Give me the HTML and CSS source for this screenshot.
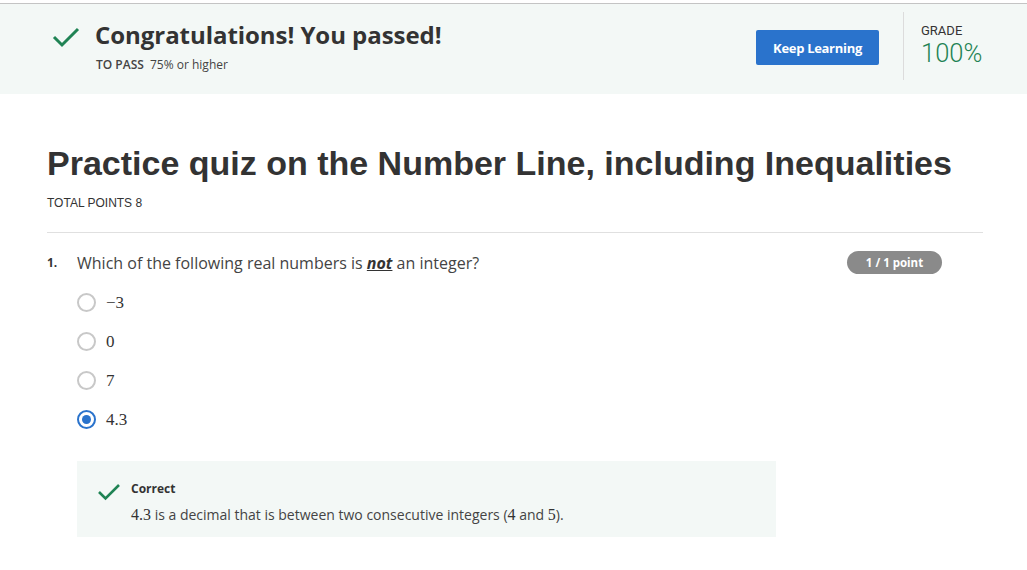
FILE: index.html
```html
<!DOCTYPE html>
<html>
<head>
<meta charset="utf-8">
<link rel="stylesheet" href="styles.css">
</head>
<body>
<div class="topline"></div>
<header class="banner">
  <div class="pass">
    <svg class="check" width="28" height="22" viewBox="0 0 28 22"><path d="M2 11 L10 19 L26 3" fill="none" stroke="#1f8354" stroke-width="3"/></svg>
    <div>
      <h2 class="congrats">Congratulations! You passed!</h2>
      <div class="topass"><b>TO PASS</b> 75% or higher</div>
    </div>
  </div>
  <button class="keep">Keep Learning</button>
  <div class="grade">
    <div class="grade-label">GRADE</div>
    <div class="grade-value">100%</div>
  </div>
</header>
<main class="content">
  <h1 class="title">Practice quiz on the Number Line, including Inequalities</h1>
  <div class="total">TOTAL POINTS 8</div>
  <div class="question">
    <div class="qhead">
      <span class="qnum">1.</span>
      <span class="qtext">Which of the following real numbers is <b><i><u>not</u></i></b> an integer?</span>
      <span class="badge">1 / 1 point</span>
    </div>
    <ul class="options">
      <li><span class="radio"></span><span class="math">−3</span></li>
      <li><span class="radio"></span><span class="math">0</span></li>
      <li><span class="radio"></span><span class="math">7</span></li>
      <li><span class="radio checked"></span><span class="math">4.3</span></li>
    </ul>
    <div class="feedback">
      <svg class="fcheck" width="24" height="18" viewBox="0 0 24 18"><path d="M2 9 L8.5 15.5 L22 2" fill="none" stroke="#1f8354" stroke-width="2.6"/></svg>
      <div>
        <div class="correct">Correct</div>
        <div class="explain"><span class="math">4.3</span> is a decimal that is between two consecutive integers (<span class="math">4</span> and <span class="math">5</span>).</div>
      </div>
    </div>
  </div>
</main>
</body>
</html>
```

FILE: styles.css
```css
* { box-sizing: border-box; }
html, body { margin: 0; padding: 0; background: #fff; }
body { font-family: "Open Sans", sans-serif; color: #333; }

.topline { height: 4px; border-bottom: 1px solid #c4c4c4; background: #fff; }

.banner {
  background: #f3f8f6;
  height: 90px;
  display: flex;
  align-items: flex-start;
  padding: 0 0 0 52px;
}
.pass { display: flex; align-items: flex-start; flex: 1; padding-top: 15px; }
.check { margin-top: 7px; margin-right: 15px; flex: none; }
.congrats {
  margin: 0;
  font-size: 24px;
  font-weight: 700;
  line-height: 32px;
  color: #333;
  letter-spacing: -0.05px;
}
.topass { font-size: 12px; color: #444; margin-top: 5px; margin-left: 1px; }
.topass b { font-weight: 600; margin-right: 3px; }

.keep {
  margin-top: 26px;
  width: 123px;
  height: 35px;
  border: none;
  border-radius: 2px;
  background: #2a73cc;
  color: #fff;
  font-family: "Open Sans", sans-serif;
  font-weight: 700;
  font-size: 13px;
  letter-spacing: -0.3px;
  padding: 0;
}
.grade {
  margin-top: 8px;
  margin-left: 24px;
  height: 68px;
  border-left: 1px solid #dcdcdc;
  padding-left: 17px;
  padding-top: 11px;
  width: 124px;
}
.grade-label { font-family: Roboto, sans-serif; font-size: 13px; color: #333; line-height: 15px; }
.grade-value { font-family: Roboto, sans-serif; font-weight: 300; font-size: 25.5px; color: #1f8354; line-height: 28px; margin-top: 1px; }

.content { padding: 0 44px 0 47px; }
.title {
  margin: 49px 0 0;
  font-family: "Liberation Sans", Arial, sans-serif;
  font-weight: 700;
  font-size: 34px;
  line-height: 40px;
  color: #333;
}
.total {
  font-family: "Liberation Sans", Arial, sans-serif;
  font-size: 12px;
  color: #333;
  margin-top: 13px;
  padding-bottom: 22px;
  border-bottom: 1px solid #e0e0e0;
}
.question { padding-top: 18px; }
.qhead { display: flex; align-items: center; padding-right: 41px; }
.qnum { font-weight: 700; font-size: 12px; width: 30px; color: #333; }
.qtext { font-size: 16px; color: #444; flex: 1; }
.qtext b { font-weight: 700; color: #333; }
.badge {
  background: #8a8a8a;
  color: #fff;
  font-weight: 700;
  font-size: 11.5px;
  border-radius: 12px;
  width: 95px;
  height: 23px;
  line-height: 23px;
  text-align: center;
}

.options { list-style: none; margin: 9px 0 0; padding: 0 0 0 30px; }
.options li { display: flex; align-items: center; height: 39px; }
.radio {
  width: 19px; height: 19px;
  border: 2px solid #c8c8c8;
  border-radius: 50%;
  margin-right: 10px;
  position: relative;
  flex: none;
}
.radio.checked { border-color: #2a73cc; }
.radio.checked::after {
  content: "";
  position: absolute;
  left: 3px; top: 3px;
  width: 9px; height: 9px;
  border-radius: 50%;
  background: #2a73cc;
}
.math { font-family: "Liberation Serif", "Times New Roman", serif; font-size: 17px; color: #333; }

.feedback {
  margin: 22px 0 0 30px;
  width: 699px;
  height: 76px;
  background: #f3f8f6;
  display: flex;
  align-items: flex-start;
  padding: 20px 0 0 20px;
}
.fcheck { margin-top: 2px; margin-right: 10px; flex: none; }
.correct { font-size: 12px; font-weight: 700; color: #333; line-height: 16px; }
.explain { font-size: 14px; color: #444; margin-top: 8px; }
.explain .math { font-size: 16px; }
```
